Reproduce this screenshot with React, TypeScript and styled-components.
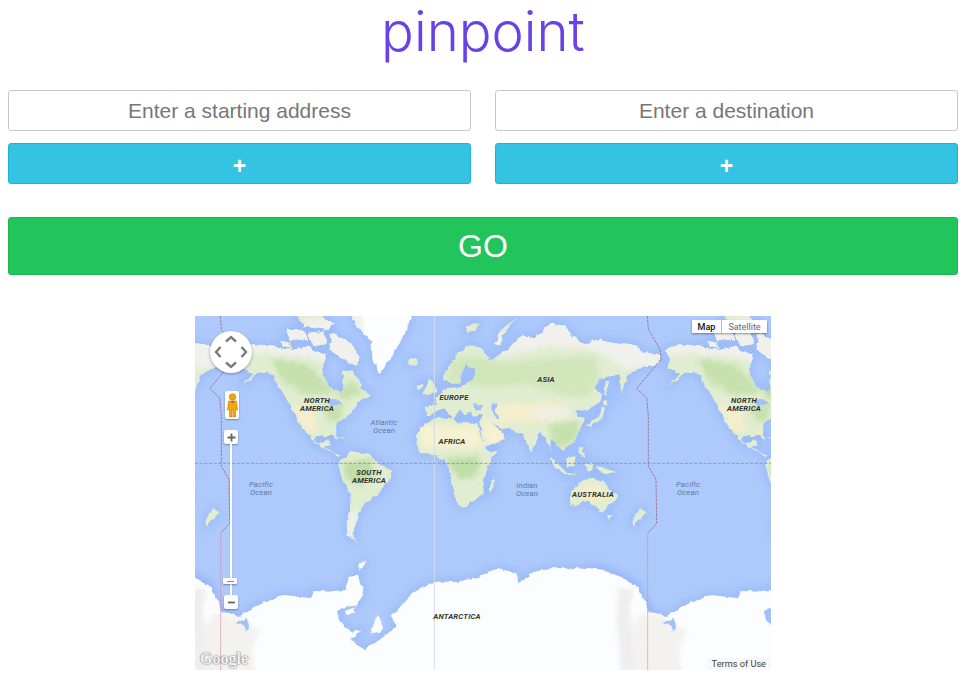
import styled, { createGlobalStyle } from "styled-components";

const GlobalStyle = createGlobalStyle`
  html, body {
    margin: 0;
    padding: 0;
    background: #fff;
    font-family: "Liberation Sans", Arial, sans-serif;
  }
`;

// map shapes are in 1/3px units, 1281 units = one world width
const shift = (pts: string, dx: number, dy = 0) =>
  pts
    .trim()
    .split(/\s+/)
    .map((p) => {
      const [x, y] = p.split(",").map(Number);
      return `${x + dx},${y + dy}`;
    })
    .join(" ");

const ICE = [
  // greenland
  "465,-20 655,-20 635,40 620,70 590,120 555,175 532,130 530,80 505,50 480,25",
  // antarctica, runs past both seams so the copies overlap
  "-81,757 0,787 45,812 30,862 80,887 135,900 190,867 240,847 270,837 350,847 355,822 400,827 450,822 465,782 490,777 505,822 490,862 480,872 470,867 430,882 430,917 470,947 500,942 465,972 510,1002 605,932 590,902 650,832 700,807 720,797 790,797 850,782 870,772 910,757 965,772 970,802 1020,767 1070,757 1200,757 1270,782 1281,787 1326,812 1361,880 1361,1140 -81,1140",
  "490,752 515,732 505,750 490,765",
];

const LAND = [
  // north america
  "132,100 175,85 215,88 260,95 300,100 340,92 362,112 395,110 385,150 380,180 410,215 440,232 445,165 470,160 490,190 500,215 527,240 490,258 470,290 430,320 420,345 430,378 414,360 370,360 355,380 365,388 400,370 405,388 390,392 415,410 440,418 430,422 400,402 365,385 335,350 305,310 290,280 270,240 250,210 235,180 215,170 190,170 135,212 175,170 140,160 140,130",
  // arctic islands
  "272,40 325,40 340,68 285,75",
  "290,-20 350,-20 420,25 400,42 330,32",
  "340,50 385,45 395,85 355,90",
  "405,50 440,65 470,85 495,130 482,152 440,125 400,100 410,80",
  "258,75 282,80 290,95 262,90",
  "640,130 668,128 662,150 640,148",
  // south america
  "430,445 470,405 520,415 555,445 592,465 575,505 545,540 530,545 500,572 480,622 472,662 485,677 458,657 455,622 465,572 468,530 440,490",
  // africa
  "660,365 672,340 700,315 725,305 770,310 800,320 850,325 862,370 880,405 905,405 880,450 862,500 868,530 845,545 835,555 815,570 795,572 775,530 770,490 755,440 720,415 680,415",
  "885,495 897,488 895,515 885,530",
  // eurasia
  "692,300 690,272 720,265 716,248 740,232 760,215 800,212 815,200 835,190 840,160 815,150 825,130 800,170 795,205 770,200 745,195 745,180 790,110 830,85 865,105 885,125 870,140 900,125 " +
    shift(
      "70,100 100,62 130,60 145,70 200,20 240,30 260,60 300,85 340,70 400,80 440,85 470,105 525,120 520,145 480,150 440,170 425,190 405,230 402,175 340,190 330,215 355,235 340,260 305,285 290,280 270,290 300,310 285,340 270,375 240,395 235,410 215,385 200,370 190,395 215,425 195,400 180,365 165,350 140,410 110,350 85,345 55,340 25,320 60,365 30,385 0,395 -10,350 -15,310 -5,300 -35,300 -45,285 -60,300 -75,280 -95,312 -115,285 -130,275 -150,285 -165,300 -178,300",
      870
    ),
  // britain, ireland, novaya zemlya, svalbard
  "685,232 700,190 716,198 722,230",
  "668,205 682,205 680,222 668,222",
  shift("32,85 50,40 92,5 60,48 44,88", 870),
  shift("-60,30 -20,20 -30,48 -55,50", 870),
  // japan, korea, sakhalin
  shift("305,325 345,300 350,270 360,280 350,310 315,332", 870),
  shift("350,255 366,250 368,266 354,268", 870),
  shift("362,195 372,195 365,240 358,235", 870),
  // islands of the south east
  shift("280,395 290,392 298,425 285,420", 870),
  shift("190,425 205,430 245,470 275,475 240,478 215,455", 870),
  shift("245,425 272,420 268,450 245,452", 870),
  shift("300,445 325,440 322,465 305,465", 870),
  shift("335,450 365,455 395,472 365,475 340,462", 870),
  "420,360 465,375 440,370",
  // australia
  shift("255,530 280,505 320,485 355,495 375,520 395,535 395,547 350,587 310,552 265,572 255,552", 870),
  shift("365,595 378,597 372,612", 870),
  // new zealand
  shift("465,577 483,590 445,630 442,617", 870),
];

const ALL_LAND = [...LAND, ...ICE];

const WATER = [
  "385,255 420,248 445,268 410,268",
  shift("20,255 38,262 32,285 45,310 30,310 22,280", 870),
  "835,265 865,265 860,283 838,283",
  "125,922 155,905 162,932 145,947 150,930 135,925",
];

const TINTS: { fill: string; points: string }[] = [
  { fill: "#f0f0ec", points: "120,60 500,-20 510,150 430,150 340,125 200,110 120,125" },
  { fill: "#f0f0ec", points: shift("-20,90 100,30 240,0 540,90 520,150 420,160 340,105 200,90 60,120", 870) },
  { fill: "#c6e1ad", points: "225,125 340,145 385,190 445,255 505,230 470,195 400,235 330,235 265,200" },
  { fill: "#c6e1ad", points: "385,265 450,270 430,320 400,315" },
  { fill: "#c0dea7", points: "445,440 525,430 540,480 490,510 455,490" },
  { fill: "#c0dea7", points: "750,425 855,420 845,480 795,495" },
  { fill: "#d2e6bc", points: shift("-120,195 -90,130 -30,120 60,140 150,130 330,120 345,190 305,245 230,235 120,205 0,215", 870) },
  { fill: "#c6e1ad", points: shift("195,325 285,315 275,370 230,395 200,385", 870) },
  { fill: "#f6f1d0", points: "665,325 850,330 860,395 680,400" },
  { fill: "#f6f1d0", points: shift("-5,305 60,340 60,375 0,390", 870) },
  { fill: "#f4eecd", points: shift("20,265 230,260 250,305 130,320 30,320", 870) },
  { fill: "#f4eecd", points: "285,265 360,275 365,345 330,345" },
  { fill: "#f4eecd", points: shift("270,515 350,505 360,560 300,550", 870) },
  { fill: "#f0f0e6", points: "455,590 490,585 480,680 455,660" },
  { fill: "#efefe4", points: shift("130,285 260,270 250,300 160,310", 870) },
  // ross shelf and the mountains beside it
  { fill: "#f3f2ef", points: "60,887 140,905 195,950 170,990 185,1140 0,1140 0,980" },
  { fill: "#eeeeef", points: "-10,810 35,820 25,880 40,1140 0,1140 -15,900" },
];

const LABELS = [
  { x: 122, y: 81, text: "NORTH\nAMERICA" },
  { x: 549, y: 81, text: "NORTH\nAMERICA" },
  { x: 259, y: 78, text: "EUROPE" },
  { x: 351, y: 60, text: "ASIA" },
  { x: 257, y: 122, text: "AFRICA" },
  { x: 174, y: 153, text: "SOUTH\nAMERICA" },
  { x: 398, y: 175, text: "AUSTRALIA" },
  { x: 262, y: 297, text: "ANTARCTICA" },
];

const OCEANS = [
  { name: "Atlantic", x: 189, y: 103 },
  { name: "Pacific", x: 66, y: 165 },
  { name: "Pacific", x: 493, y: 165 },
  { name: "Indian", x: 332, y: 166 },
];

const DATELINE_TOP = "487,0 490,40 525,100 528,130 455,218 485,245 490,300 490,450 513,490 515,622 488,652";
const DATELINE_BOTTOM = "488,652 488,1062";

const Dateline = ({ dx }: { dx: number }) => (
  <g fill="none" transform={`translate(${dx} 0)`}>
    <polyline points={DATELINE_TOP} stroke="#a0688f" strokeWidth="2.6" strokeDasharray="8 3" />
    <polyline points={DATELINE_BOTTOM} stroke="#d68ea3" strokeWidth="2.4" strokeDasharray="7 2" />
  </g>
);

const World = () => (
  <MapDrawing viewBox="0 0 1728 1062">
    <defs>
      <filter id="coast" filterUnits="userSpaceOnUse" x="-200" y="-100" width="1700" height="1300">
        <feTurbulence type="fractalNoise" baseFrequency="0.045" numOctaves="3" seed="4" result="noise" />
        <feDisplacementMap in="SourceGraphic" in2="noise" scale="16" xChannelSelector="R" yChannelSelector="G" />
        <feGaussianBlur stdDeviation="1.5" />
      </filter>
      <filter id="softer" filterUnits="userSpaceOnUse" x="-200" y="-100" width="1700" height="1300">
        <feGaussianBlur stdDeviation="8" />
      </filter>
      <filter id="glow" filterUnits="userSpaceOnUse" x="-200" y="-100" width="1700" height="1300">
        <feGaussianBlur stdDeviation="14" />
      </filter>
      <clipPath id="landClip">
        {ALL_LAND.map((p, i) => (
          <polygon key={i} points={p} />
        ))}
      </clipPath>
      <g id="worldGlow" filter="url(#glow)" opacity="0.36">
        {ALL_LAND.map((p, i) => (
          <polygon key={i} points={p} fill="#7ba2f4" stroke="#7ba2f4" strokeWidth="20" />
        ))}
      </g>
      <g id="worldLand" filter="url(#coast)">
        {LAND.map((p, i) => (
          <polygon key={i} points={p} fill="#e0edd0" />
        ))}
        {ICE.map((p, i) => (
          <polygon key={i} points={p} fill="#fcfdfe" />
        ))}
        <g clipPath="url(#landClip)">
          <g filter="url(#softer)">
            {TINTS.map((t, i) => (
              <polygon key={i} points={t.points} fill={t.fill} />
            ))}
          </g>
        </g>
        {WATER.map((p, i) => (
          <polygon key={i} points={p} fill="#a3c1f8" />
        ))}
        <polygon points="525,952 548,897 565,922 555,947" fill="#fcfdfe" />
        <polygon points="450,882 475,872 478,892 455,897" fill="#fcfdfe" />
      </g>
    </defs>
    <rect width="1728" height="1062" fill="#aecafc" />
    <use href="#worldGlow" x="-1281" />
    <use href="#worldGlow" />
    <use href="#worldGlow" x="1281" />
    <use href="#worldLand" x="-1281" />
    <use href="#worldLand" />
    <use href="#worldLand" x="1281" />
    <line x1="718" y1="0" x2="718" y2="1062" stroke="#d8dbe2" strokeWidth="3" />
    <line x1="0" y1="442" x2="1728" y2="442" stroke="#a37f9e" strokeWidth="2.5" strokeDasharray="9 5" />
    <Dateline dx={870} />
    <Dateline dx={-411} />
  </MapDrawing>
);

const PanControl = () => (
  <PanCircle>
    <svg width="42" height="42" viewBox="0 0 42 42" fill="none" stroke="#7b7b7b" strokeWidth="2.4">
      <polyline points="16,10.5 21,6 26,10.5" />
      <polyline points="16,31.5 21,36 26,31.5" />
      <polyline points="10.5,16 6,21 10.5,26" />
      <polyline points="31.5,16 36,21 31.5,26" />
    </svg>
  </PanCircle>
);

const Pegman = () => (
  <PegmanBox>
    <svg width="13" height="26" viewBox="0 0 13 26">
      <circle cx="6.5" cy="5" r="3.3" fill="#f0a313" stroke="#c47f0a" strokeWidth="0.6" />
      <path d="M2.5 9h8l1 9h-2v7H7V18H6v7H3.5v-7h-2z" fill="#f4a60f" stroke="#c8860c" strokeWidth="0.6" />
      <path d="M4.5 9h4L6.5 11.5z" fill="#e2433a" />
    </svg>
  </PegmanBox>
);

export default function App() {
  return (
    <Page>
      <GlobalStyle />
      <Title>pinpoint</Title>
      <Fields>
        <Column>
          <AddressInput placeholder="Enter a starting address" />
          <AddButton>+</AddButton>
        </Column>
        <Column>
          <AddressInput placeholder="Enter a destination" />
          <AddButton>+</AddButton>
        </Column>
      </Fields>
      <GoButton>GO</GoButton>
      <MapFrame>
        <World />
        {LABELS.map((l) => (
          <PlaceLabel key={l.text + l.x} $x={l.x} $y={l.y}>
            {l.text}
          </PlaceLabel>
        ))}
        {OCEANS.map((o) => (
          <OceanLabel key={o.x} $x={o.x} $y={o.y}>
            {o.name}
            {"\n"}Ocean
          </OceanLabel>
        ))}
        <PanControl />
        <Pegman />
        <ZoomButton $top={114}>
          <svg width="9" height="9" viewBox="0 0 9 9">
            <path d="M3.6 0.5h1.8v3.1h3.1v1.8H5.4v3.1H3.6V5.4H0.5V3.6h3.1z" fill="#666" />
          </svg>
        </ZoomButton>
        <ZoomTrack />
        <ZoomThumb />
        <ZoomButton $top={279}>
          <svg width="9" height="9" viewBox="0 0 9 9">
            <rect x="1" y="3.6" width="7" height="1.8" fill="#666" />
          </svg>
        </ZoomButton>
        <MapTypes>
          <MapType $active>Map</MapType>
          <MapType>Satellite</MapType>
        </MapTypes>
        <GoogleMark>Google</GoogleMark>
        <TermsLink>Terms of Use</TermsLink>
      </MapFrame>
    </Page>
  );
}

const Page = styled.div`
  display: flex;
  flex-direction: column;
  padding: 0 8px 17px;
`;

const Title = styled.h1`
  margin: 0 0 16px;
  height: 74px;
  line-height: 62px;
  text-align: center;
  font-family: Inter, "Open Sans", sans-serif;
  font-size: 54.5px;
  font-weight: 300;
  color: #6a41e6;
`;

const Fields = styled.div`
  display: grid;
  grid-template-columns: 1fr 1fr;
  column-gap: 24px;
`;

const Column = styled.div`
  display: flex;
  flex-direction: column;
  gap: 12px;
`;

const AddressInput = styled.input`
  box-sizing: border-box;
  width: 100%;
  height: 41px;
  padding: 1px 12px 0;
  border: 1px solid #c8c8c8;
  border-radius: 3px;
  background: #fff;
  text-align: center;
  font-family: "Liberation Sans", Arial, sans-serif;
  font-size: 21px;

  &::placeholder {
    color: #777;
    opacity: 1;
  }
`;

const AddButton = styled.button`
  box-sizing: border-box;
  height: 41px;
  padding: 5px 0 0;
  border: 1px solid #1fb3d3;
  border-radius: 3px;
  background: #34c3e3;
  color: #fff;
  font-family: "Liberation Sans", Arial, sans-serif;
  font-size: 23px;
  font-weight: 700;
`;

const GoButton = styled.button`
  box-sizing: border-box;
  height: 58px;
  margin-top: 33px;
  padding: 0;
  border: 1px solid #1cb652;
  border-radius: 3px;
  background: #22c45c;
  color: #fff;
  font-family: "Liberation Sans", Arial, sans-serif;
  font-size: 32px;
`;

const MapFrame = styled.div`
  position: relative;
  align-self: center;
  width: 576px;
  height: 354px;
  margin-top: 41px;
  overflow: hidden;
`;

const MapDrawing = styled.svg`
  display: block;
  width: 576px;
  height: 354px;
`;

const PlaceLabel = styled.div<{ $x: number; $y: number }>`
  position: absolute;
  left: ${({ $x }) => $x}px;
  top: ${({ $y }) => $y}px;
  transform: translateX(-50%);
  white-space: pre;
  text-align: center;
  font-family: Roboto, sans-serif;
  font-size: 7.7px;
  font-style: italic;
  font-weight: 700;
  line-height: 7.5px;
  letter-spacing: 0.2px;
  color: #333;
`;

const OceanLabel = styled(PlaceLabel)`
  font-weight: 400;
  color: #5d7aa6;
`;

const PanCircle = styled.div`
  position: absolute;
  left: 15px;
  top: 15px;
  width: 42px;
  height: 42px;
  border-radius: 50%;
  background: #fff;
  box-shadow: 0 1px 3px rgba(0, 0, 0, 0.35);
`;

const PegmanBox = styled.div`
  position: absolute;
  left: 30px;
  top: 75px;
  display: flex;
  align-items: center;
  justify-content: center;
  width: 14px;
  height: 28px;
  border-radius: 2px;
  background: #fff;
  box-shadow: 0 1px 2px rgba(0, 0, 0, 0.35);
`;

const ZoomButton = styled.div<{ $top: number }>`
  position: absolute;
  left: 29px;
  top: ${({ $top }) => $top}px;
  display: flex;
  align-items: center;
  justify-content: center;
  width: 14px;
  height: 14px;
  border-radius: 2px;
  background: #fff;
  box-shadow: 0 1px 2px rgba(0, 0, 0, 0.35);
`;

const ZoomTrack = styled.div`
  position: absolute;
  left: 35px;
  top: 128px;
  width: 2px;
  height: 151px;
  background: #fff;
  box-shadow: 0 0 1px rgba(0, 0, 0, 0.35);
`;

const ZoomThumb = styled.div`
  position: absolute;
  left: 28px;
  top: 262px;
  display: flex;
  align-items: center;
  justify-content: center;
  width: 14px;
  height: 6px;
  border-radius: 1px;
  background: #fff;
  box-shadow: 0 1px 2px rgba(0, 0, 0, 0.35);

  &::after {
    content: "";
    width: 7px;
    height: 1px;
    background: #888;
  }
`;

const MapTypes = styled.div`
  position: absolute;
  top: 4px;
  right: 4px;
  display: flex;
  height: 13px;
  box-shadow: 0 1px 2px rgba(0, 0, 0, 0.4);
`;

const MapType = styled.div<{ $active?: boolean }>`
  display: flex;
  align-items: center;
  justify-content: center;
  width: ${({ $active }) => ($active ? "29px" : "45px")};
  background: #fff;
  border-left: ${({ $active }) => ($active ? "none" : "1px solid #bbb")};
  font-family: Roboto, sans-serif;
  font-size: 9px;
  font-weight: ${({ $active }) => ($active ? 500 : 400)};
  color: ${({ $active }) => ($active ? "#111" : "#666")};
`;

const GoogleMark = styled.div`
  position: absolute;
  left: 5px;
  bottom: 2px;
  font-family: "Liberation Serif", serif;
  font-size: 16px;
  font-weight: 700;
  color: #f4f4f4;
  text-shadow: 0 0 1px #666, 0 0 2px #888;
`;

const TermsLink = styled.div`
  position: absolute;
  right: 0;
  bottom: 0;
  padding: 1px 5px;
  background: rgba(245, 245, 245, 0.75);
  font-family: Roboto, sans-serif;
  font-size: 9.2px;
  line-height: 10px;
  color: #444;
`;
